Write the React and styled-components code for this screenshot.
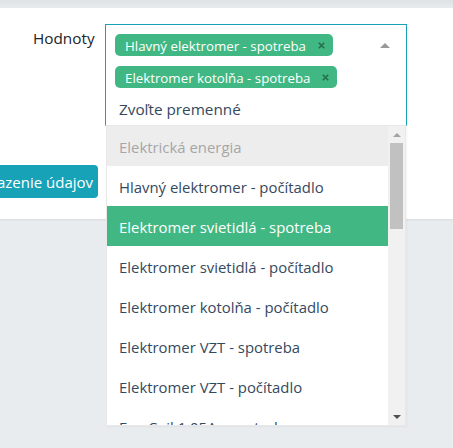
import React from "react";
import styled, { createGlobalStyle } from "styled-components";

const Global = createGlobalStyle`
  html, body { margin: 0; padding: 0; }
  body {
    background: #e9ecef;
    font-family: "Open Sans", "Noto Sans", sans-serif;
    color: #212529;
    overflow: hidden;
  }
`;

const Page = styled.div`
  padding-top: 8px;
  height: 440px;
  background: linear-gradient(#dfe2e5 0, #e9ecef 8px);
`;

const Card = styled.div`
  background: #fff;
  display: flex;
  flex-direction: column;
  padding: 16px 0 21px 0;
  box-shadow: 0 1px 2px rgba(0, 0, 0, 0.08);
`;

const FieldRow = styled.div`
  display: flex;
  align-items: flex-start;
`;

const Label = styled.label`
  width: 105px;
  box-sizing: border-box;
  padding: 4px 0 0 33px;
  font-size: 15.3px;
  line-height: 20px;
  color: #212529;
`;

const Select = styled.div`
  position: relative;
  width: 302px;
  height: 102px;
  box-sizing: border-box;
  border: 1px solid #17a2b8;
  border-bottom-color: #e8e8e8;
  padding: 9px 40px 0 9px;
  display: flex;
  flex-wrap: wrap;
  align-content: flex-start;
  row-gap: 10px;
  z-index: 2;
`;

const Tag = styled.span`
  display: inline-flex;
  align-items: center;
  height: 22px;
  padding: 1px 8px 0 10px;
  box-sizing: border-box;
  border-radius: 5px;
  background: #41b883;
  color: #fff;
  font-size: 13.3px;
  white-space: nowrap;
`;

const TagClose = styled.svg`
  margin-left: 12px;
  width: 7px;
  height: 7px;
  flex: none;
`;

const Placeholder = styled.div`
  width: 100%;
  padding: 1px 0 0 4px;
  font-size: 15.3px;
  line-height: 20px;
  color: #35495e;
`;

const Caret = styled.span`
  position: absolute;
  top: 18px;
  right: 16px;
  width: 0;
  height: 0;
  border-left: 5px solid transparent;
  border-right: 5px solid transparent;
  border-bottom: 5px solid #999;
`;

const Dropdown = styled.div`
  position: absolute;
  top: calc(100% + 1px);
  left: 0;
  width: 300px;
  height: 300px;
  background: #fff;
  border: 1px solid #e8e8e8;
  border-top: none;
  box-sizing: border-box;
  display: flex;
  box-shadow: 1px 1px 2px rgba(0, 0, 0, 0.04);
`;

const OptionList = styled.ul`
  list-style: none;
  margin: 0;
  padding: 0;
  flex: 1;
  overflow: hidden;
`;

const Option = styled.li`
  height: 40px;
  box-sizing: border-box;
  display: flex;
  align-items: center;
  padding: 2px 0 0 12px;
  font-size: 14.9px;
  white-space: nowrap;
  color: ${(p) => (p.$group ? "#a6a6a6" : p.$active ? "#fff" : "#35495e")};
  background: ${(p) => (p.$group ? "#ededed" : p.$active ? "#41b883" : "#fff")};
`;

const Scrollbar = styled.div`
  width: 17px;
  flex: none;
  background: #f1f1f1;
  display: flex;
  flex-direction: column;
  align-items: center;
`;

const ArrowBtn = styled.div`
  height: 17px;
  width: 17px;
  display: flex;
  align-items: center;
  justify-content: center;
  &::before {
    content: "";
    width: 0;
    height: 0;
    border-left: 4px solid transparent;
    border-right: 4px solid transparent;
    ${(p) =>
      p.$down
        ? "border-top: 4px solid #505050;"
        : "border-bottom: 4px solid #a3a3a3;"}
  }
`;

const Track = styled.div`
  flex: 1;
  width: 100%;
  display: flex;
  justify-content: center;
`;

const Thumb = styled.div`
  width: 13px;
  height: 86px;
  background: #c1c1c1;
`;

const ActionRow = styled.div`
  display: flex;
  margin-top: 39px;
`;

const Button = styled.button`
  margin-left: -48px;
  height: 33px;
  padding: 0 5px 0 12px;
  border: none;
  border-radius: 4px;
  background: #17a2b8;
  color: #fff;
  font-family: inherit;
  font-size: 15px;
  white-space: nowrap;
`;

const CloseIcon = () => (
  <TagClose viewBox="0 0 7 7" aria-hidden="true">
    <path d="M0.8 0.8 L6.2 6.2 M6.2 0.8 L0.8 6.2" stroke="#266d4d" strokeWidth="1.6" />
  </TagClose>
);

const options = [
  { label: "Elektrická energia", group: true },
  { label: "Hlavný elektromer - počítadlo" },
  { label: "Elektromer svietidlá - spotreba", active: true },
  { label: "Elektromer svietidlá - počítadlo" },
  { label: "Elektromer kotolňa - počítadlo" },
  { label: "Elektromer VZT - spotreba" },
  { label: "Elektromer VZT - počítadlo" },
  { label: "Fan Coil 1.05A - spotreba" },
];

export default function App() {
  return (
    <>
      <Global />
      <Page>
        <Card>
          <FieldRow>
            <Label>Hodnoty</Label>
            <Select>
              <Tag>
                Hlavný elektromer - spotreba
                <CloseIcon />
              </Tag>
              <Tag>
                Elektromer kotolňa - spotreba
                <CloseIcon />
              </Tag>
              <Placeholder>Zvoľte premenné</Placeholder>
              <Caret />
              <Dropdown>
                <OptionList>
                  {options.map((o) => (
                    <Option key={o.label} $group={o.group} $active={o.active}>
                      {o.label}
                    </Option>
                  ))}
                </OptionList>
                <Scrollbar>
                  <ArrowBtn />
                  <Track>
                    <Thumb />
                  </Track>
                  <ArrowBtn $down />
                </Scrollbar>
              </Dropdown>
            </Select>
          </FieldRow>
          <ActionRow>
            <Button>Zobrazenie údajov</Button>
          </ActionRow>
        </Card>
      </Page>
    </>
  );
}
